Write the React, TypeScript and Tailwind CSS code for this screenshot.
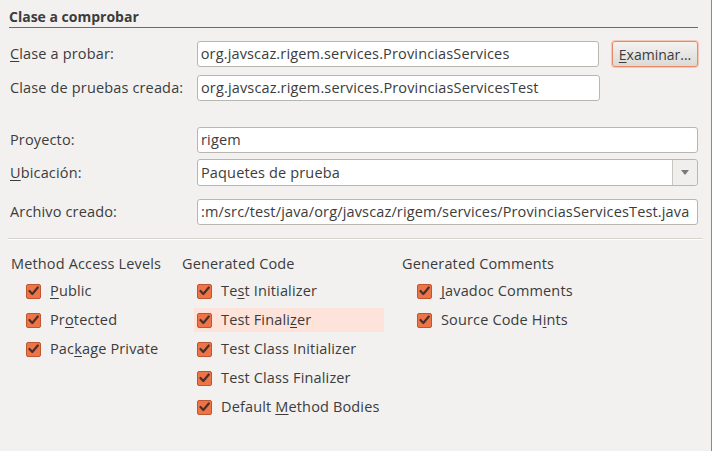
import React from "react";

const Check = () => (
  <span className="w-[15px] h-[15px] shrink-0 rounded-[2px] bg-[#ec7446] border border-[#bf5630] flex items-center justify-center">
    <svg width="11" height="10" viewBox="0 0 11 10">
      <path d="M1.5 5 L4.3 8 L9.8 1.5" stroke="#4a2f2a" strokeWidth="2.2" fill="none" strokeLinecap="round" strokeLinejoin="round" />
    </svg>
  </span>
);

const U = ({ children }: { children: React.ReactNode }) => <span className="underline underline-offset-2">{children}</span>;

const Item = ({ children, hl }: { children: React.ReactNode; hl?: boolean }) => (
  <div className={`flex items-center h-[24px] ml-[12px] pl-[3px] gap-[9px] ${hl ? "bg-[#fde3da]" : ""}`}>
    <Check />
    <span>{children}</span>
  </div>
);

const Input = ({ value, className = "" }: { value: string; className?: string }) => (
  <div className={`h-[26px] bg-white border border-[#b9b6b0] rounded-[3px] flex items-center pl-[3px] overflow-hidden whitespace-nowrap ${className}`}>
    {value}
  </div>
);

export default function App() {
  return (
    <div className="w-[712px] h-[451px] bg-[#f2f1f0] text-[#3c3c3c] text-[14.5px] tracking-[0.15px] border-r border-[#8a8a8a] overflow-hidden relative" style={{ fontFamily: '"Open Sans", sans-serif' }}>
      <div className="pl-[9px] pt-[7px] pr-[13px]">
        <div className="font-bold h-[20px] leading-[20px] text-[14px] tracking-normal">Clase a comprobar</div>
        <div className="h-px bg-[#6e6b66]" />
      </div>
      <div className="pl-[10px] pr-[13px] pt-[13px] flex flex-col">
        <div className="flex items-center h-[26px]">
          <div className="w-[187px]"><U>C</U>lase a probar:</div>
          <Input value="org.javscaz.rigem.services.ProvinciasServices" className="w-[403px]" />
          <button className="ml-[13px] w-[86px] h-[26px] rounded-[3px] border border-[#e88a68] bg-gradient-to-b from-[#f4f3f2] to-[#dcdad6] shadow-[0_0_0_1px_#f6c7b5] tracking-normal text-[14px]">
            <U>E</U>xaminar...
          </button>
        </div>
        <div className="flex items-center h-[26px] mt-[8px]">
          <div className="w-[187px]">Clase de pruebas creada:</div>
          <Input value="org.javscaz.rigem.services.ProvinciasServicesTest" className="w-[403px]" />
        </div>
        <div className="flex items-center h-[26px] mt-[26px]">
          <div className="w-[187px]">Proyecto:</div>
          <Input value="rigem" className="flex-1" />
        </div>
        <div className="flex items-center h-[27px] mt-[6px]">
          <div className="w-[187px]"><U>U</U>bicación:</div>
          <div className="flex-1 h-[27px] bg-white border border-[#b9b6b0] rounded-[3px] flex items-center">
            <span className="flex-1 pl-[3px]">Paquetes de prueba</span>
            <span className="w-[25px] h-full border-l border-[#c9c6c0] bg-[#f0efee] flex items-center justify-center rounded-r-[3px]">
              <svg width="8" height="5" viewBox="0 0 8 5"><path d="M0 0 L8 0 L4 5 Z" fill="#7a7a7a" /></svg>
            </span>
          </div>
        </div>
        <div className="flex items-center h-[26px] mt-[13px]">
          <div className="w-[187px]">Archivo creado:</div>
          <Input value=":m/src/test/java/org/javscaz/rigem/services/ProvinciasServicesTest.java" className="flex-1" />
        </div>
      </div>
      <div className="mx-[8px] mt-[13px] h-[2px] border-t border-[#d6d3ce] border-b-white border-b" />
      <div className="flex pl-[11px] pt-[14px]">
        <div className="w-[171px]">
          <div className="h-[20px] leading-[20px] mb-[5px]">Method Access Levels</div>
          <div className="flex flex-col gap-[5px]">
            <Item><U>P</U>ublic</Item>
            <Item>Pr<U>o</U>tected</Item>
            <Item>Pac<U>k</U>age Private</Item>
          </div>
        </div>
        <div className="w-[220px]">
          <div className="h-[20px] leading-[20px] mb-[5px]">Generated Code</div>
          <div className="flex flex-col gap-[5px] w-[202px]">
            <Item>Te<U>s</U>t Initializer</Item>
            <Item hl>Test Finali<U>z</U>er</Item>
            <Item>Test Class Initializer</Item>
            <Item>Test Class Finalizer</Item>
            <Item>Default <U>M</U>ethod Bodies</Item>
          </div>
        </div>
        <div>
          <div className="h-[20px] leading-[20px] mb-[5px]">Generated Comments</div>
          <div className="flex flex-col gap-[5px]">
            <Item><U>J</U>avadoc Comments</Item>
            <Item>Source Code H<U>i</U>nts</Item>
          </div>
        </div>
      </div>
    </div>
  );
}
